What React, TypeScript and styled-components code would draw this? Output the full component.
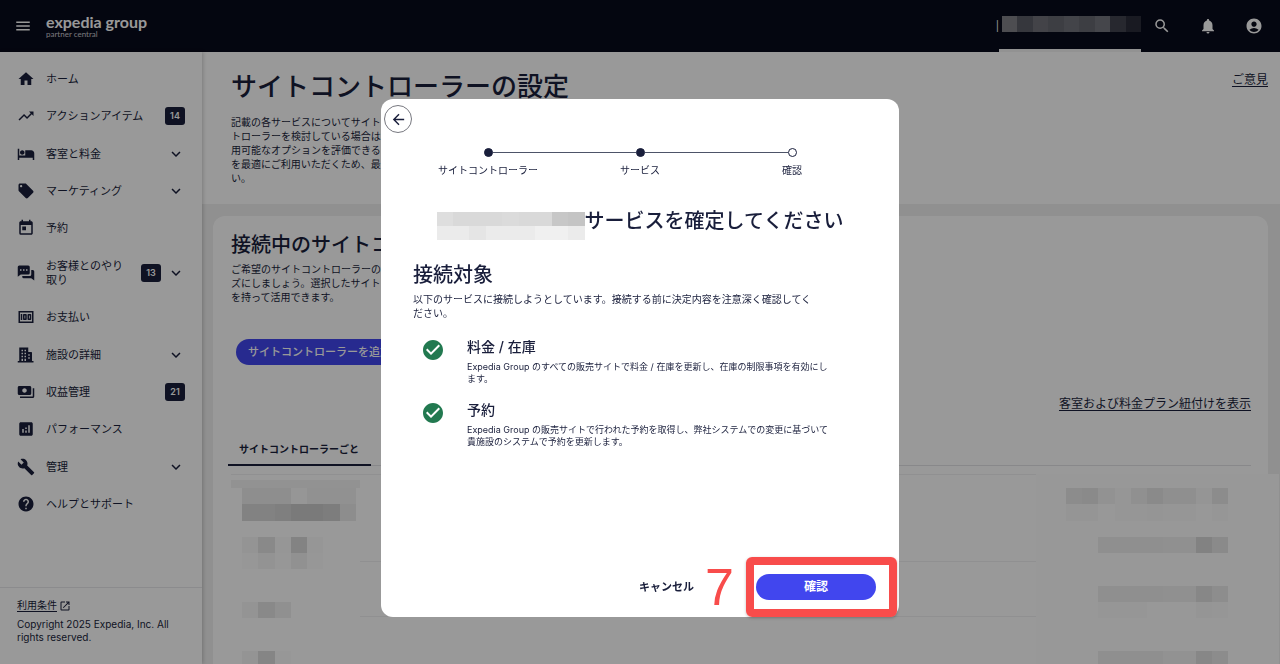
import React from 'react';
import styled, { createGlobalStyle } from 'styled-components';
import {
  MdMenu,
  MdSearch,
  MdNotifications,
  MdAccountCircle,
  MdHome,
  MdTrendingUp,
  MdHotel,
  MdLocalOffer,
  MdToday,
  MdMoney,
  MdPayments,
  MdAnalytics,
  MdBuild,
  MdHelp,
  MdOpenInNew,
  MdArrowBack,
  MdCheckCircle,
  MdExpandMore,
} from 'react-icons/md';

const ink = '#191e3b';
const fontStack = "Inter, 'Noto Sans CJK JP', sans-serif";

const GlobalStyle = createGlobalStyle`
  *, *::before, *::after { box-sizing: border-box; }
  body {
    margin: 0;
    color: ${ink};
    background: #fff;
    font-family: ${fontStack};
    font-size: 11px;
  }
  button { font-family: inherit; cursor: pointer; }
  h1, h2, h3, p, ul, ol { margin: 0; padding: 0; }
  li { list-style: none; }
  svg { display: block; flex: none; }
`;

const Shell = styled.div`
  height: 100vh;
  display: flex;
  flex-direction: column;
  overflow: hidden;
`;

/* ---------- header ---------- */

const Header = styled.header`
  height: 52px;
  flex: none;
  display: flex;
  align-items: center;
  padding: 0 17px 0 14px;
  background: #080a1b;
  color: #fff;
`;

const HeaderButton = styled.button`
  display: flex;
  padding: 0;
  border: 0;
  background: none;
  color: inherit;
`;

const Logo = styled.a`
  display: flex;
  flex-direction: column;
  margin-left: 14px;
  color: #fff;
  text-decoration: none;
  font-family: Lato, sans-serif;
`;

const LogoName = styled.span`
  font-size: 16px;
  line-height: 16px;
  font-weight: 700;
`;

const LogoSub = styled.span`
  font-size: 8px;
  line-height: 8px;
  color: #c8c8d0;
`;

const Account = styled.div`
  display: flex;
  align-self: stretch;
  margin-left: auto;
`;

const AccountMark = styled.span`
  font-size: 10px;
  line-height: 52px;
`;

const AccountTab = styled.div`
  width: 142px;
  display: flex;
  flex-direction: column;
  justify-content: space-between;
  padding: 16px 0 0 3px;
  box-shadow: inset 0 -3px #f4f4f4;
`;

const HeaderIcons = styled.div`
  display: flex;
  gap: 28px;
  margin-left: 12px;
`;

/* ---------- redacted areas ---------- */

const MosaicGrid = styled.div<{ $cols: number; $w: number; $h: number; $tone: string }>`
  display: grid;
  flex: none;
  grid-template-columns: repeat(${p => p.$cols}, 1fr);
  grid-auto-rows: 1fr;
  width: ${p => p.$w}px;
  height: ${p => p.$h}px;
  color: ${p => p.$tone};
`;

const MosaicCell = styled.span<{ $a: number }>`
  background: currentColor;
  opacity: ${p => p.$a / 100};
`;

type MosaicProps = { rows: number[][]; width: number; height: number; tone?: string };

function Mosaic({ rows, width, height, tone = '#000' }: MosaicProps) {
  return (
    <MosaicGrid $cols={rows[0].length} $w={width} $h={height} $tone={tone} aria-hidden="true">
      {rows.flatMap((row, y) => row.map((a, x) => <MosaicCell key={`${y}-${x}`} $a={a} />))}
    </MosaicGrid>
  );
}

const accountCells = [[58, 40, 50, 46, 51, 46, 52, 28, 17]];

const titleCells = [
  [13, 15, 15, 15, 14, 15, 15, 22, 23],
  [8, 8, 10, 8, 8, 8, 6, 6, 8],
];

const blank7 = [0, 0, 0, 0, 0, 0, 0];
const leftCells = [
  [7, 7, 7, 2, 5, 5, 5],
  [15, 15, 17, 20, 20, 18, 8],
  blank7,
  [3, 10, 2, 14, 2, 0, 0],
  [1, 4, 1, 5, 1, 0, 0],
  blank7,
  blank7,
  [3, 10, 6, 0, 0, 0, 0],
  blank7,
  blank7,
  [3, 13, 1, 0, 0, 0, 0],
];

const blank10 = [0, 0, 0, 0, 0, 0, 0, 0, 0, 0];
const rightCells = [
  [8, 9, 4, 1, 5, 9, 6, 6, 2, 8],
  [2, 2, 0, 1, 1, 2, 1, 1, 0, 1],
  blank10,
  [0, 0, 6, 6, 6, 6, 5, 5, 14, 9],
  blank10,
  blank10,
  [0, 0, 6, 6, 6, 6, 5, 5, 11, 7],
  [0, 0, 1, 1, 1, 0, 0, 0, 2, 1],
  blank10,
  blank10,
  [0, 0, 6, 6, 6, 6, 4, 4, 11, 8],
];

/* ---------- sidebar ---------- */

const Body = styled.div`
  flex: 1;
  min-height: 0;
  display: flex;
`;

const Sidebar = styled.aside`
  position: relative;
  width: 202px;
  flex: none;
  display: flex;
  flex-direction: column;
  justify-content: space-between;
  padding-top: 9px;
  background: #fff;
  box-shadow: 1px 0 4px rgba(0, 0, 0, 0.2);
`;

const Nav = styled.ul`
  flex: 1;
  max-height: 461px;
  display: flex;
  flex-direction: column;
  justify-content: space-between;
`;

const NavLink = styled.a<{ $tall?: boolean }>`
  height: ${p => (p.$tall ? 50 : 36)}px;
  display: flex;
  align-items: center;
  padding: 0 17px;
  color: ${ink};
  text-decoration: none;
  font-size: 11px;
  line-height: 14px;
`;

const NavLabel = styled.span`
  flex: 1;
  margin-left: 11px;
  white-space: nowrap;
`;

const Badge = styled.span`
  width: 20px;
  height: 18px;
  border-radius: 3px;
  background: ${ink};
  color: #fff;
  font-size: 9px;
  line-height: 18px;
  font-weight: 600;
  text-align: center;
`;

const Chevron = styled(MdExpandMore)`
  margin-left: 6px;
`;

const SidebarFooter = styled.footer`
  height: 77px;
  padding: 11px 17px;
  border-top: 1px solid #e8e8ec;
  font-size: 10px;
  line-height: 13px;
`;

const TermsLink = styled.a`
  display: flex;
  align-items: center;
  gap: 2px;
  margin-bottom: 6px;
  color: ${ink};
  line-height: 13px;
  text-underline-offset: 2px;
`;

function ChatIcon() {
  return (
    <svg width="18" height="18" viewBox="0 0 24 24" fill="currentColor" aria-hidden="true">
      <path
        fillRule="evenodd"
        d="M3 2h12a2 2 0 0 1 2 2v8a2 2 0 0 1-2 2H5l-4 3V4a2 2 0 0 1 2-2zm1 5v2h2V7H4zm4 0v2h2V7H8zm4 0v2h2V7h-2z"
      />
      <path d="M19 8h2a2 2 0 0 1 2 2v12l-4-3H9a2 2 0 0 1-2-2v-1h10a2 2 0 0 0 2-2V8z" />
    </svg>
  );
}

function BuildingIcon() {
  return (
    <svg width="18" height="18" viewBox="0 0 24 24" fill="currentColor" aria-hidden="true">
      <path
        fillRule="evenodd"
        d="M3 2h12v6h4a1 1 0 0 1 1 1v11h2v2H1v-2h2V2zm3 3v2h2V5H6zm4 0v2h2V5h-2zM6 9v2h2V9H6zm4 0v2h2V9h-2zm-4 4v2h2v-2H6zm4 0v2h2v-2h-2zm-4 4v3h2v-3H6zm4 0v3h2v-3h-2zm5-6v2h2v-2h-2zm0 4v2h2v-2h-2z"
      />
    </svg>
  );
}

type NavItem = { icon: React.ReactNode; label: React.ReactNode; badge?: number; more?: boolean; tall?: boolean };

const navItems: NavItem[] = [
  { icon: <MdHome size={18} />, label: 'ホーム' },
  { icon: <MdTrendingUp size={18} />, label: 'アクションアイテム', badge: 14 },
  { icon: <MdHotel size={18} />, label: '客室と料金', more: true },
  { icon: <MdLocalOffer size={18} />, label: 'マーケティング', more: true },
  { icon: <MdToday size={18} />, label: '予約' },
  { icon: <ChatIcon />, label: <>お客様とのやり<br />取り</>, badge: 13, more: true, tall: true },
  { icon: <MdMoney size={18} />, label: 'お支払い' },
  { icon: <BuildingIcon />, label: '施設の詳細', more: true },
  { icon: <MdPayments size={18} />, label: '収益管理', badge: 21 },
  { icon: <MdAnalytics size={18} />, label: 'パフォーマンス' },
  { icon: <MdBuild size={18} />, label: '管理', more: true },
  { icon: <MdHelp size={18} />, label: 'ヘルプとサポート' },
];

/* ---------- page ---------- */

const Main = styled.main`
  flex: 1;
  min-width: 0;
  background: #f0f0f0;
`;

const Intro = styled.section`
  display: flex;
  justify-content: space-between;
  align-items: flex-start;
  padding: 20px 12px 19px 29px;
  background: #fff;
`;

const PageTitle = styled.h1`
  margin-bottom: 13px;
  font-size: 26px;
  line-height: 30px;
  font-weight: 500;
`;

const Text = styled.p`
  font-size: 10px;
  line-height: 14px;
`;

const TextLink = styled.a`
  color: ${ink};
  font-size: 12px;
  line-height: 16px;
  text-underline-offset: 2px;
`;

const Card = styled.section`
  display: flex;
  flex-direction: column;
  align-items: flex-start;
  margin: 12px 12px 0 11px;
  padding: 15px 17px 0 18px;
  border-radius: 12px 12px 0 0;
  background: #fff;
`;

const SectionTitle = styled.h2`
  margin-bottom: 3px;
  font-size: 20px;
  line-height: 28px;
  font-weight: 500;
`;

const PillButton = styled.button`
  height: 26px;
  padding: 0 12px;
  border: 0;
  border-radius: 13px;
  background: #4146ee;
  color: #fff;
  font-size: 11px;
  line-height: 26px;
  font-weight: 500;
`;

const AddButton = styled(PillButton)`
  margin: 35px 0 31px 5px;
`;

const MappingLink = styled(TextLink)`
  align-self: flex-end;
  margin-bottom: 22px;
`;

const Tabs = styled.div`
  align-self: stretch;
  display: flex;
  margin-left: -3px;
  box-shadow: inset 0 -1px #e3e3e6;
`;

const Tab = styled.button`
  height: 32px;
  padding: 0 12px 0 11px;
  border: 0;
  border-bottom: 2px solid ${ink};
  background: none;
  color: ${ink};
  font-size: 10px;
  line-height: 28px;
  font-weight: 600;
`;

const Listing = styled.div`
  align-self: stretch;
  display: flex;
  margin: 8px -28px 0 0;
`;

const LeftColumn = styled.div`
  width: 129px;
  padding-top: 5px;
  border-top: 1px solid #f0f0f2;
`;

const LeftStrip = styled.div`
  height: 8px;
  background: #f3f3f3;
`;

const Inset = styled.div`
  padding-left: 11px;
`;

const MiddleColumn = styled.div`
  flex: 1;
`;

const Line = styled.div<{ $h: number }>`
  height: ${p => p.$h}px;
  border-top: 1px solid #f0f0f2;
`;

const RightColumn = styled.div`
  width: 243px;
  padding: 14px 0 0 30px;
  background: #fdfdfd;
`;

/* ---------- dialog ---------- */

const Overlay = styled.div`
  position: fixed;
  inset: 0;
  display: flex;
  align-items: center;
  justify-content: center;
  padding-top: 52px;
  background: rgba(0, 0, 0, 0.4);
`;

const Dialog = styled.section`
  width: 100%;
  max-width: 518px;
  min-height: 518px;
  display: flex;
  flex-direction: column;
  padding: 6px 0 17px;
  border-radius: 12px;
  background: #fff;
`;

const BackButton = styled.button`
  width: 28px;
  height: 28px;
  display: flex;
  align-items: center;
  justify-content: center;
  margin-left: 3px;
  padding: 0;
  border: 1px solid #77787f;
  border-radius: 50%;
  background: #fff;
  color: ${ink};
`;

const Steps = styled.ol`
  display: flex;
  margin: 15px 31px 30px;
`;

const StepItem = styled.li`
  flex: 1;
  font-size: 10px;
  line-height: 14px;
  text-align: center;
`;

const Track = styled.div`
  display: flex;
  align-items: center;
  margin-bottom: 6px;
`;

const Rail = styled.span<{ $on: boolean }>`
  flex: 1;
  height: 1px;
  background: ${p => (p.$on ? '#4d5468' : 'transparent')};
`;

const Dot = styled.span<{ $filled: boolean }>`
  width: 9px;
  height: 9px;
  border: 1px solid ${ink};
  border-radius: 50%;
  background: ${p => (p.$filled ? ink : '#fff')};
`;

const DialogHeading = styled.div`
  display: flex;
  align-items: flex-start;
  justify-content: center;
  height: 34px;
  margin-bottom: 20px;

  & > div { margin-top: 5px; }
`;

const DialogTitle = styled.h2`
  font-size: 20px;
  line-height: 28px;
  font-weight: 500;
`;

const DialogContent = styled.div`
  flex: 1;
  padding: 0 32px;
`;

const Services = styled.ul`
  display: flex;
  flex-direction: column;
  gap: 15px;
  margin: 17px 0 0 8px;
`;

const Service = styled.li`
  display: flex;
  gap: 22px;
`;

const Check = styled(MdCheckCircle)`
  margin-top: 1px;
  color: #227950;
`;

const ServiceTitle = styled.h3`
  margin-bottom: 4px;
  font-size: 14px;
  line-height: 20px;
  font-weight: 500;
`;

const ServiceText = styled.p`
  font-size: 9px;
  line-height: 12px;
  white-space: nowrap;
`;

const DialogFooter = styled.footer`
  display: flex;
  align-items: center;
  justify-content: flex-end;
  gap: 62px;
  padding-right: 23px;
`;

const CancelButton = styled.button`
  padding: 0;
  border: 0;
  background: none;
  color: ${ink};
  font-size: 11px;
  line-height: 16px;
  font-weight: 600;
`;

const ConfirmArea = styled.div`
  position: relative;
`;

const ConfirmButton = styled(PillButton)`
  display: block;
  width: 120px;
  font-size: 12px;
  font-weight: 600;
`;

const Highlight = styled.span`
  position: absolute;
  inset: -17px -21px -17px -10px;
  border: 8px solid #f84c4b;
  border-radius: 6px;
  box-shadow: 0 1px 3px rgba(0, 0, 0, 0.25);
  pointer-events: none;
`;

const StepNumber = styled.span`
  position: absolute;
  top: -13px;
  left: -51px;
  color: #f84c4b;
  font-family: 'Liberation Sans', sans-serif;
  font-size: 52px;
  line-height: 52px;
`;

const steps = ['サイトコントローラー', 'サービス', '確認'];

export default function App() {
  return (
    <>
      <GlobalStyle />
      <Shell>
        <Header>
          <HeaderButton aria-label="メニュー"><MdMenu size={18} /></HeaderButton>
          <Logo href="#">
            <LogoName>expedia group</LogoName>
            <LogoSub>partner central</LogoSub>
          </Logo>
          <Account>
            <AccountMark>|</AccountMark>
            <AccountTab>
              <Mosaic rows={accountCells} width={139} height={16} tone="#d8d8d8" />
            </AccountTab>
          </Account>
          <HeaderIcons>
            <HeaderButton aria-label="検索"><MdSearch size={18} /></HeaderButton>
            <HeaderButton aria-label="通知"><MdNotifications size={18} /></HeaderButton>
            <HeaderButton aria-label="アカウント"><MdAccountCircle size={18} /></HeaderButton>
          </HeaderIcons>
        </Header>

        <Body>
          <Sidebar>
            <Nav>
              {navItems.map((item, i) => (
                <li key={i}>
                  <NavLink href="#" $tall={item.tall}>
                    {item.icon}
                    <NavLabel>{item.label}</NavLabel>
                    {item.badge && <Badge>{item.badge}</Badge>}
                    {item.more && <Chevron size={18} />}
                  </NavLink>
                </li>
              ))}
            </Nav>
            <SidebarFooter>
              <TermsLink href="#">利用条件 <MdOpenInNew size={12} /></TermsLink>
              <p>Copyright 2025 Expedia, Inc. All rights reserved.</p>
            </SidebarFooter>
          </Sidebar>

          <Main>
            <Intro>
              <div>
                <PageTitle>サイトコントローラーの設定</PageTitle>
                <Text>
                  記載の各サービスについてサイト<br />
                  トローラーを検討している場合は<br />
                  用可能なオプションを評価できる<br />
                  を最適にご利用いただくため、最<br />
                  い。
                </Text>
              </div>
              <TextLink href="#">ご意見</TextLink>
            </Intro>

            <Card>
              <SectionTitle>接続中のサイトコ</SectionTitle>
              <Text>
                ご希望のサイトコントローラーの<br />
                ズにしましょう。選択したサイト<br />
                を持って活用できます。
              </Text>
              <AddButton>サイトコントローラーを追加</AddButton>
              <MappingLink href="#">客室および料金プラン紐付けを表示</MappingLink>
              <Tabs role="tablist">
                <Tab role="tab" aria-selected="true">サイトコントローラーごと</Tab>
              </Tabs>
              <Listing>
                <LeftColumn>
                  <LeftStrip />
                  <Inset><Mosaic rows={leftCells} width={114} height={179} /></Inset>
                </LeftColumn>
                <MiddleColumn>
                  <Line $h={87} />
                  <Line $h={55} />
                  <Line $h={55} />
                </MiddleColumn>
                <RightColumn>
                  <Mosaic rows={rightCells} width={162} height={179} />
                </RightColumn>
              </Listing>
            </Card>
          </Main>
        </Body>
      </Shell>

      <Overlay>
        <Dialog role="dialog" aria-modal="true" aria-labelledby="dialog-title">
          <BackButton aria-label="戻る"><MdArrowBack size={17} /></BackButton>
          <Steps>
            {steps.map((label, i) => (
              <StepItem key={label}>
                <Track>
                  <Rail $on={i > 0} />
                  <Dot $filled={i < 2} />
                  <Rail $on={i < 2} />
                </Track>
                {label}
              </StepItem>
            ))}
          </Steps>
          <DialogHeading>
            <Mosaic rows={titleCells} width={148} height={28} />
            <DialogTitle id="dialog-title">サービスを確定してください</DialogTitle>
          </DialogHeading>
          <DialogContent>
            <SectionTitle as="h3">接続対象</SectionTitle>
            <Text>
              以下のサービスに接続しようとしています。接続する前に決定内容を注意深く確認してく<br />
              ださい。
            </Text>
            <Services>
              <Service>
                <Check size={24} />
                <div>
                  <ServiceTitle>料金 / 在庫</ServiceTitle>
                  <ServiceText>
                    Expedia Group のすべての販売サイトで料金 / 在庫を更新し、在庫の制限事項を有効にし<br />
                    ます。
                  </ServiceText>
                </div>
              </Service>
              <Service>
                <Check size={24} />
                <div>
                  <ServiceTitle>予約</ServiceTitle>
                  <ServiceText>
                    Expedia Group の販売サイトで行われた予約を取得し、弊社システムでの変更に基づいて<br />
                    貴施設のシステムで予約を更新します。
                  </ServiceText>
                </div>
              </Service>
            </Services>
          </DialogContent>
          <DialogFooter>
            <CancelButton>キャンセル</CancelButton>
            <ConfirmArea>
              <ConfirmButton>確認</ConfirmButton>
              <Highlight />
              <StepNumber>7</StepNumber>
            </ConfirmArea>
          </DialogFooter>
        </Dialog>
      </Overlay>
    </>
  );
}
